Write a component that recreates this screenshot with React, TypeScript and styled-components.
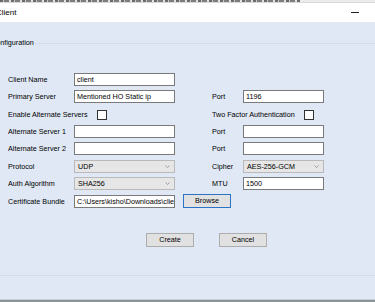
import React from 'react'
import styled, { createGlobalStyle } from 'styled-components'

const GlobalStyle = createGlobalStyle`
    html, body {
        margin: 0;
        padding: 0;
        width: 375px;
        height: 302px;
        overflow: hidden;
        background: #dfe8f4;
    }
    body {
        font-family: "Liberation Sans", Arial, sans-serif;
        color: #000;
    }
`

const Screen = styled.div`
    width: 375px;
    height: 302px;
    overflow: hidden;
    display: flex;
    flex-direction: column;
    background: #dfe8f4;
`

const TopStrip = styled.div`
    height: 3px;
    flex: none;
    background:
        repeating-linear-gradient(90deg, #6b6b6b 0 3px, #c8c8c8 3px 4px, #7d7d7d 4px 9px, #e2e2e2 9px 11px) 0 0 / 300px 2px no-repeat,
        #ececec;
    border-bottom: 1px solid #d8d8d8;
    box-sizing: border-box;
`

const Window = styled.div`
    flex: 1;
    display: flex;
    flex-direction: column;
    margin-left: -24px;
    width: 420px;
    min-height: 0;
`

const TitleBar = styled.div`
    height: 19px;
    flex: none;
    background: #fff;
    display: flex;
    align-items: center;
    padding-left: 20px;
    font-size: 8px;
`

const Title = styled.span`
    flex: 1;
`

const MinIcon = styled.svg`
    flex: none;
    margin-right: 37px;
    margin-top: -1px;
`

const Body = styled.div`
    flex: 1;
    display: flex;
    flex-direction: column;
    padding-top: 21px;
`

const GroupBox = styled.div`
    margin-left: 6px;
    border-top: 1px solid #d2dbe7;
    border-bottom: 1px solid #d2dbe7;
    border-left: 1px solid #d2dbe7;
    padding-bottom: 28px;
`

const Legend = styled.div`
    width: fit-content;
    margin: -6px 0 0 7px;
    padding: 0 1px;
    height: 10px;
    line-height: 10px;
    font-size: 7.2px;
    background: #dfe8f4;
`

const Form = styled.div`
    display: grid;
    grid-template-columns: 66px 101px 37px 31px 81px;
    grid-template-rows: 17px 18px 17px 17px 18px 17px 18px 17px;
    margin: 25px 0 0 25px;
    font-size: 7.2px;
    align-items: start;
`

const Label = styled.div<{ $col?: number }>`
    grid-column: ${p => p.$col ?? 1};
    height: 13px;
    line-height: 13px;
    white-space: nowrap;
`

const CheckLabel = styled.div<{ $col: number }>`
    grid-column: ${p => p.$col} / span 2;
    display: flex;
    align-items: center;
    height: 13px;
    white-space: nowrap;
`

const CheckBox = styled.span`
    width: 8px;
    height: 8px;
    border: 1px solid #333;
    background: #fff;
    margin-left: 9px;
`

const TextBox = styled.div<{ $col?: number }>`
    grid-column: ${p => p.$col ?? 2};
    height: 13px;
    box-sizing: border-box;
    border: 1px solid #7a7a7a;
    background: #fff;
    line-height: 11px;
    padding-left: 2px;
    white-space: nowrap;
    overflow: hidden;
`

const Select = styled.div<{ $col?: number }>`
    grid-column: ${p => p.$col ?? 2};
    height: 13px;
    box-sizing: border-box;
    border: 1px solid #b9b9b9;
    background: #e6e6e6;
    display: flex;
    align-items: center;
    justify-content: space-between;
    padding: 0 4px 0 3px;
`

const Chevron = () => (
    <svg width="5" height="3" viewBox="0 0 5 3">
        <path d="M0.5 0.5 L2.5 2.5 L4.5 0.5" fill="none" stroke="#8a8a8a" strokeWidth="0.8" />
    </svg>
)

const Button = styled.div<{ $focused?: boolean }>`
    width: 48px;
    height: 14px;
    box-sizing: border-box;
    border: 1px solid ${p => (p.$focused ? '#2b73c4' : '#adadad')};
    background: #e1e1e1;
    text-align: center;
    line-height: 12px;
    font-size: 7.2px;
`

const BrowseCell = styled.div`
    grid-column: 3 / span 2;
    margin: -1px 0 0 8px;
`

const Actions = styled.div`
    display: flex;
    gap: 25px;
    margin: 21px 0 0 163px;
`

const BottomEdge = styled.div`
    margin-top: auto;
    height: 2px;
    flex: none;
    border-top: 1px solid #c7ced3;
    background: #8a9396;
`

const App = () => {
    return (
        <Screen>
            <GlobalStyle />
            <TopStrip />
            <Window>
                <TitleBar>
                    <Title>Client</Title>
                    <MinIcon width="8" height="8" viewBox="0 0 8 8">
                        <line x1="0" y1="4.5" x2="8" y2="4.5" stroke="#222" strokeWidth="1" />
                    </MinIcon>
                </TitleBar>
                <Body>
                    <GroupBox>
                        <Legend>Configuration</Legend>
                        <Form>
                            <Label>Client Name</Label>
                            <TextBox>client</TextBox>
                            <span />
                            <span />
                            <span />

                            <Label>Primary Server</Label>
                            <TextBox>Mentioned HO Static ip</TextBox>
                            <Label $col={4}>Port</Label>
                            <TextBox $col={5}>1196</TextBox>

                            <CheckLabel $col={1}>Enable Alternate Servers<CheckBox /></CheckLabel>
                            <CheckLabel $col={4}>Two Factor Authentication<CheckBox /></CheckLabel>

                            <Label>Alternate Server 1</Label>
                            <TextBox />
                            <Label $col={4}>Port</Label>
                            <TextBox $col={5} />

                            <Label>Alternate Server 2</Label>
                            <TextBox />
                            <Label $col={4}>Port</Label>
                            <TextBox $col={5} />

                            <Label>Protocol</Label>
                            <Select>UDP<Chevron /></Select>
                            <Label $col={4}>Cipher</Label>
                            <Select $col={5}>AES-256-GCM<Chevron /></Select>

                            <Label>Auth Algorithm</Label>
                            <Select>SHA256<Chevron /></Select>
                            <Label $col={4}>MTU</Label>
                            <TextBox $col={5}>1500</TextBox>

                            <Label>Certificate Bundle</Label>
                            <TextBox>C:\Users\kisho\Downloads\client.ovpn</TextBox>
                            <BrowseCell>
                                <Button $focused>Browse</Button>
                            </BrowseCell>
                        </Form>
                        <Actions>
                            <Button>Create</Button>
                            <Button>Cancel</Button>
                        </Actions>
                    </GroupBox>
                    <BottomEdge />
                </Body>
            </Window>
        </Screen>
    )
}

export default App
